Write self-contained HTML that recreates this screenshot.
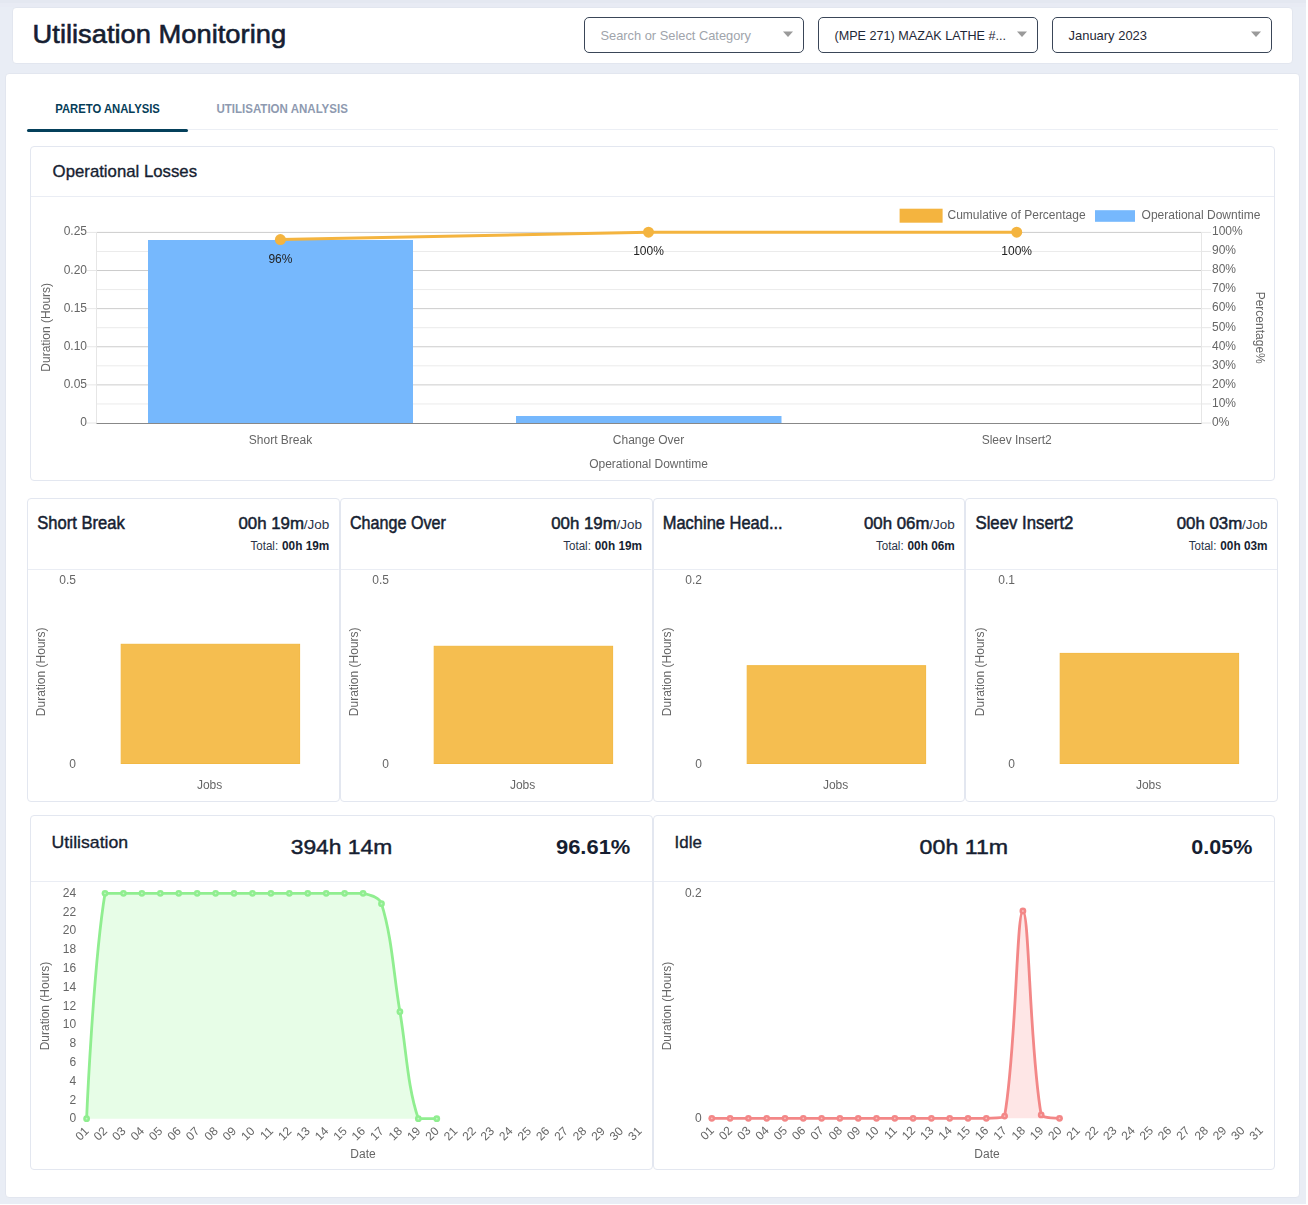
<!DOCTYPE html>
<html><head><meta charset="utf-8"><title>Utilisation Monitoring</title>
<style>
html,body{margin:0;padding:0;}
body{width:1308px;height:1205px;overflow:hidden;position:relative;background:#e9edf5;font-family:"Liberation Sans", sans-serif;}
svg{position:absolute;left:0;top:0;}
svg text{font-family:"Liberation Sans", sans-serif;}
.ch{will-change:transform;}
</style></head><body>
<div style="position:absolute;left:0;top:0;width:1308px;height:3px;background:#e4e8f1"></div>
<div style="position:absolute;left:0;top:3px;width:1308px;height:4px;background:#e8ebf4"></div>
<div style="position:absolute;left:12px;top:7px;width:1281px;height:57px;background:#fff;border:1px solid #e2e6ef;border-radius:4px;box-sizing:border-box;"></div>
<div style="position:absolute;left:5px;top:73px;width:1295px;height:1125px;background:#fff;border:1px solid #e2e6ef;border-radius:4px;box-sizing:border-box;"></div>
<div style="position:absolute;left:584px;top:17px;width:220px;height:36px;border:1px solid #3a4658;border-radius:5px;box-sizing:border-box"></div>
<div style="position:absolute;left:818px;top:17px;width:220px;height:36px;border:1px solid #3a4658;border-radius:5px;box-sizing:border-box"></div>
<div style="position:absolute;left:1052px;top:17px;width:220px;height:36px;border:1px solid #3a4658;border-radius:5px;box-sizing:border-box"></div>
<div style="position:absolute;left:30px;top:146px;width:1245px;height:335px;background:#fff;border:1px solid #e3e7f0;border-radius:4px;box-sizing:border-box;"></div>
<div style="position:absolute;left:27.0px;top:498px;width:312.75px;height:304px;background:#fff;border:1px solid #e3e7f0;border-radius:4px;box-sizing:border-box;"></div>
<div style="position:absolute;left:339.75px;top:498px;width:312.75px;height:304px;background:#fff;border:1px solid #e3e7f0;border-radius:4px;box-sizing:border-box;"></div>
<div style="position:absolute;left:652.5px;top:498px;width:312.75px;height:304px;background:#fff;border:1px solid #e3e7f0;border-radius:4px;box-sizing:border-box;"></div>
<div style="position:absolute;left:965.25px;top:498px;width:312.75px;height:304px;background:#fff;border:1px solid #e3e7f0;border-radius:4px;box-sizing:border-box;"></div>
<div style="position:absolute;left:30px;top:815px;width:622.5px;height:355px;background:#fff;border:1px solid #e3e7f0;border-radius:4px;box-sizing:border-box;"></div>
<div style="position:absolute;left:652.5px;top:815px;width:622.5px;height:355px;background:#fff;border:1px solid #e3e7f0;border-radius:4px;box-sizing:border-box;"></div>
<svg width="1308" height="1205" viewBox="0 0 1308 1205">
<text x="32.60" y="43.00" font-size="26" fill="#161e31" text-anchor="start" textLength="253.50" lengthAdjust="spacingAndGlyphs" stroke="#161e31" stroke-width="0.6">Utilisation Monitoring</text>
<text x="600.50" y="39.70" font-size="13" fill="#a0a4ab" text-anchor="start" textLength="150.50" lengthAdjust="spacingAndGlyphs">Search or Select Category</text>
<text x="834.50" y="39.70" font-size="13" fill="#1f2937" text-anchor="start" textLength="171.50" lengthAdjust="spacingAndGlyphs">(MPE 271) MAZAK LATHE #...</text>
<text x="1068.50" y="39.70" font-size="13" fill="#1f2937" text-anchor="start" textLength="78.50" lengthAdjust="spacingAndGlyphs">January 2023</text>
<rect x="27" y="129" width="1251" height="1" fill="#eceff5"/>
<rect x="27" y="129" width="161" height="3" rx="1.5" fill="#04405b"/>
<text x="55.30" y="113.00" font-size="13" font-weight="700" fill="#053d58" text-anchor="start" textLength="104.50" lengthAdjust="spacingAndGlyphs">PARETO ANALYSIS</text>
<text x="216.40" y="113.00" font-size="13" font-weight="700" fill="#8e9ab0" text-anchor="start" textLength="131.50" lengthAdjust="spacingAndGlyphs">UTILISATION ANALYSIS</text>
<text x="52.60" y="177.00" font-size="17" fill="#161e31" text-anchor="start" textLength="144.50" lengthAdjust="spacingAndGlyphs" stroke="#161e31" stroke-width="0.35">Operational Losses</text>
<text x="37.20" y="529.00" font-size="18" fill="#161e31" text-anchor="start" textLength="87.50" lengthAdjust="spacingAndGlyphs" stroke="#161e31" stroke-width="0.5">Short Break</text>
<text x="329.25" y="529.00" font-size="12" fill="#2a3449" text-anchor="end" textLength="25.50" lengthAdjust="spacingAndGlyphs">/Job</text>
<text x="303.95" y="529.00" font-size="17" fill="#161e31" text-anchor="end" textLength="65.50" lengthAdjust="spacingAndGlyphs" stroke="#161e31" stroke-width="0.5">00h 19m</text>
<text x="329.25" y="549.80" font-size="12" font-weight="700" fill="#161e31" text-anchor="end" textLength="47.20" lengthAdjust="spacingAndGlyphs">00h 19m</text>
<text x="278.15" y="549.80" font-size="12" fill="#2a3449" text-anchor="end" textLength="27.60" lengthAdjust="spacingAndGlyphs">Total:</text>
<text x="349.95" y="529.00" font-size="18" fill="#161e31" text-anchor="start" textLength="96.00" lengthAdjust="spacingAndGlyphs" stroke="#161e31" stroke-width="0.5">Change Over</text>
<text x="642.00" y="529.00" font-size="12" fill="#2a3449" text-anchor="end" textLength="25.50" lengthAdjust="spacingAndGlyphs">/Job</text>
<text x="616.70" y="529.00" font-size="17" fill="#161e31" text-anchor="end" textLength="65.50" lengthAdjust="spacingAndGlyphs" stroke="#161e31" stroke-width="0.5">00h 19m</text>
<text x="642.00" y="549.80" font-size="12" font-weight="700" fill="#161e31" text-anchor="end" textLength="47.20" lengthAdjust="spacingAndGlyphs">00h 19m</text>
<text x="590.90" y="549.80" font-size="12" fill="#2a3449" text-anchor="end" textLength="27.60" lengthAdjust="spacingAndGlyphs">Total:</text>
<text x="662.70" y="529.00" font-size="18" fill="#161e31" text-anchor="start" textLength="120.00" lengthAdjust="spacingAndGlyphs" stroke="#161e31" stroke-width="0.5">Machine Head...</text>
<text x="954.75" y="529.00" font-size="12" fill="#2a3449" text-anchor="end" textLength="25.50" lengthAdjust="spacingAndGlyphs">/Job</text>
<text x="929.45" y="529.00" font-size="17" fill="#161e31" text-anchor="end" textLength="65.50" lengthAdjust="spacingAndGlyphs" stroke="#161e31" stroke-width="0.5">00h 06m</text>
<text x="954.75" y="549.80" font-size="12" font-weight="700" fill="#161e31" text-anchor="end" textLength="47.20" lengthAdjust="spacingAndGlyphs">00h 06m</text>
<text x="903.65" y="549.80" font-size="12" fill="#2a3449" text-anchor="end" textLength="27.60" lengthAdjust="spacingAndGlyphs">Total:</text>
<text x="975.45" y="529.00" font-size="18" fill="#161e31" text-anchor="start" textLength="98.00" lengthAdjust="spacingAndGlyphs" stroke="#161e31" stroke-width="0.5">Sleev Insert2</text>
<text x="1267.50" y="529.00" font-size="12" fill="#2a3449" text-anchor="end" textLength="25.50" lengthAdjust="spacingAndGlyphs">/Job</text>
<text x="1242.20" y="529.00" font-size="17" fill="#161e31" text-anchor="end" textLength="65.50" lengthAdjust="spacingAndGlyphs" stroke="#161e31" stroke-width="0.5">00h 03m</text>
<text x="1267.50" y="549.80" font-size="12" font-weight="700" fill="#161e31" text-anchor="end" textLength="47.20" lengthAdjust="spacingAndGlyphs">00h 03m</text>
<text x="1216.40" y="549.80" font-size="12" fill="#2a3449" text-anchor="end" textLength="27.60" lengthAdjust="spacingAndGlyphs">Total:</text>
<text x="51.60" y="848.10" font-size="17" fill="#161e31" text-anchor="start" textLength="76.60" lengthAdjust="spacingAndGlyphs" stroke="#161e31" stroke-width="0.35">Utilisation</text>
<text x="290.70" y="853.60" font-size="21" fill="#161e31" text-anchor="start" textLength="101.50" lengthAdjust="spacingAndGlyphs" stroke="#161e31" stroke-width="0.45">394h 14m</text>
<text x="556.00" y="853.60" font-size="21" font-weight="700" fill="#161e31" text-anchor="start" textLength="74.30" lengthAdjust="spacingAndGlyphs">96.61%</text>
<text x="674.60" y="848.40" font-size="17" fill="#161e31" text-anchor="start" textLength="27.30" lengthAdjust="spacingAndGlyphs" stroke="#161e31" stroke-width="0.35">Idle</text>
<text x="919.60" y="853.60" font-size="21" fill="#161e31" text-anchor="start" textLength="88.50" lengthAdjust="spacingAndGlyphs" stroke="#161e31" stroke-width="0.45">00h 11m</text>
<text x="1191.30" y="853.80" font-size="21" font-weight="700" fill="#161e31" text-anchor="start" textLength="61.00" lengthAdjust="spacingAndGlyphs">0.05%</text>
</svg>
<svg class="ch" width="1308" height="1205" viewBox="0 0 1308 1205">
<path d="M783.0 31.5 L793.0 31.5 L788.0 37 Z" fill="#9a9a9a"/>
<path d="M1017.0 31.5 L1027.0 31.5 L1022.0 37 Z" fill="#9a9a9a"/>
<path d="M1251.0 31.5 L1261.0 31.5 L1256.0 37 Z" fill="#9a9a9a"/>
<rect x="31.00" y="196.00" width="1243.00" height="1.00" fill="#eaedf4"/>
<line x1="96.50" y1="403.94" x2="1201.50" y2="403.94" stroke="#ebebeb" stroke-width="1"/>
<line x1="96.50" y1="384.88" x2="1201.50" y2="384.88" stroke="#cccccc" stroke-width="1"/>
<line x1="96.50" y1="365.82" x2="1201.50" y2="365.82" stroke="#ebebeb" stroke-width="1"/>
<line x1="96.50" y1="346.76" x2="1201.50" y2="346.76" stroke="#cccccc" stroke-width="1"/>
<line x1="96.50" y1="327.70" x2="1201.50" y2="327.70" stroke="#ebebeb" stroke-width="1"/>
<line x1="96.50" y1="308.64" x2="1201.50" y2="308.64" stroke="#cccccc" stroke-width="1"/>
<line x1="96.50" y1="289.58" x2="1201.50" y2="289.58" stroke="#ebebeb" stroke-width="1"/>
<line x1="96.50" y1="270.52" x2="1201.50" y2="270.52" stroke="#cccccc" stroke-width="1"/>
<line x1="96.50" y1="251.46" x2="1201.50" y2="251.46" stroke="#ebebeb" stroke-width="1"/>
<line x1="96.50" y1="232.40" x2="1201.50" y2="232.40" stroke="#cccccc" stroke-width="1"/>
<line x1="86.50" y1="423.00" x2="96.50" y2="423.00" stroke="#e6e6e6" stroke-width="1"/>
<text x="87.00" y="426.00" font-size="12" fill="#666666" text-anchor="end">0</text>
<line x1="86.50" y1="384.88" x2="96.50" y2="384.88" stroke="#e6e6e6" stroke-width="1"/>
<text x="87.00" y="387.88" font-size="12" fill="#666666" text-anchor="end">0.05</text>
<line x1="86.50" y1="346.76" x2="96.50" y2="346.76" stroke="#e6e6e6" stroke-width="1"/>
<text x="87.00" y="349.76" font-size="12" fill="#666666" text-anchor="end">0.10</text>
<line x1="86.50" y1="308.64" x2="96.50" y2="308.64" stroke="#e6e6e6" stroke-width="1"/>
<text x="87.00" y="311.64" font-size="12" fill="#666666" text-anchor="end">0.15</text>
<line x1="86.50" y1="270.52" x2="96.50" y2="270.52" stroke="#e6e6e6" stroke-width="1"/>
<text x="87.00" y="273.52" font-size="12" fill="#666666" text-anchor="end">0.20</text>
<line x1="86.50" y1="232.40" x2="96.50" y2="232.40" stroke="#e6e6e6" stroke-width="1"/>
<text x="87.00" y="235.40" font-size="12" fill="#666666" text-anchor="end">0.25</text>
<line x1="1201.50" y1="423.00" x2="1211.00" y2="423.00" stroke="#e6e6e6" stroke-width="1"/>
<text x="1212.00" y="425.80" font-size="12" fill="#666666" text-anchor="start">0%</text>
<line x1="1201.50" y1="403.94" x2="1211.00" y2="403.94" stroke="#e6e6e6" stroke-width="1"/>
<text x="1212.00" y="406.74" font-size="12" fill="#666666" text-anchor="start">10%</text>
<line x1="1201.50" y1="384.88" x2="1211.00" y2="384.88" stroke="#e6e6e6" stroke-width="1"/>
<text x="1212.00" y="387.68" font-size="12" fill="#666666" text-anchor="start">20%</text>
<line x1="1201.50" y1="365.82" x2="1211.00" y2="365.82" stroke="#e6e6e6" stroke-width="1"/>
<text x="1212.00" y="368.62" font-size="12" fill="#666666" text-anchor="start">30%</text>
<line x1="1201.50" y1="346.76" x2="1211.00" y2="346.76" stroke="#e6e6e6" stroke-width="1"/>
<text x="1212.00" y="349.56" font-size="12" fill="#666666" text-anchor="start">40%</text>
<line x1="1201.50" y1="327.70" x2="1211.00" y2="327.70" stroke="#e6e6e6" stroke-width="1"/>
<text x="1212.00" y="330.50" font-size="12" fill="#666666" text-anchor="start">50%</text>
<line x1="1201.50" y1="308.64" x2="1211.00" y2="308.64" stroke="#e6e6e6" stroke-width="1"/>
<text x="1212.00" y="311.44" font-size="12" fill="#666666" text-anchor="start">60%</text>
<line x1="1201.50" y1="289.58" x2="1211.00" y2="289.58" stroke="#e6e6e6" stroke-width="1"/>
<text x="1212.00" y="292.38" font-size="12" fill="#666666" text-anchor="start">70%</text>
<line x1="1201.50" y1="270.52" x2="1211.00" y2="270.52" stroke="#e6e6e6" stroke-width="1"/>
<text x="1212.00" y="273.32" font-size="12" fill="#666666" text-anchor="start">80%</text>
<line x1="1201.50" y1="251.46" x2="1211.00" y2="251.46" stroke="#e6e6e6" stroke-width="1"/>
<text x="1212.00" y="254.26" font-size="12" fill="#666666" text-anchor="start">90%</text>
<line x1="1201.50" y1="232.40" x2="1211.00" y2="232.40" stroke="#e6e6e6" stroke-width="1"/>
<text x="1212.00" y="235.20" font-size="12" fill="#666666" text-anchor="start">100%</text>
<line x1="96.50" y1="232.40" x2="96.50" y2="423.00" stroke="#e6e6e6" stroke-width="1"/>
<line x1="1201.50" y1="232.40" x2="1201.50" y2="423.00" stroke="#e6e6e6" stroke-width="1"/>
<rect x="148.00" y="240.00" width="265.00" height="183.00" fill="#76b8fd"/>
<rect x="516.00" y="416.00" width="265.50" height="7.00" fill="#76b8fd"/>
<line x1="96.50" y1="423.50" x2="1201.50" y2="423.50" stroke="#888" stroke-width="1.2"/>
<polyline points="280.4,239.6 648.5,232.2 1016.7,232.2" fill="none" stroke="#f4b43f" stroke-width="3"/>
<circle cx="280.4" cy="239.6" r="5.5" fill="#f4b43f"/>
<circle cx="648.5" cy="232.2" r="5.5" fill="#f4b43f"/>
<circle cx="1016.7" cy="232.2" r="5.5" fill="#f4b43f"/>
<text x="280.40" y="262.60" font-size="12" fill="#222" text-anchor="middle">96%</text>
<text x="648.50" y="255.20" font-size="12" fill="#222" text-anchor="middle">100%</text>
<text x="1016.70" y="255.20" font-size="12" fill="#222" text-anchor="middle">100%</text>
<text x="280.50" y="444.00" font-size="12" fill="#666666" text-anchor="middle">Short Break</text>
<text x="648.50" y="444.00" font-size="12" fill="#666666" text-anchor="middle">Change Over</text>
<text x="1016.70" y="444.00" font-size="12" fill="#666666" text-anchor="middle">Sleev Insert2</text>
<text x="648.50" y="468.00" font-size="12" fill="#666666" text-anchor="middle">Operational Downtime</text>
<text transform="translate(49.6,327.3) rotate(-90)" font-size="12" fill="#666666" text-anchor="middle">Duration (Hours)</text>
<text transform="translate(1255.9,327.7) rotate(90)" font-size="12" fill="#666666" text-anchor="middle">Percentage%</text>
<rect x="899.60" y="208.70" width="43.00" height="14.00" fill="#f4b43f"/>
<text x="947.50" y="219.00" font-size="12" fill="#666666" text-anchor="start">Cumulative of Percentage</text>
<rect x="1095.00" y="210.20" width="40.00" height="11.60" fill="#76b8fd"/>
<text x="1141.60" y="219.00" font-size="12" fill="#666666" text-anchor="start">Operational Downtime</text>
<rect x="28.00" y="569.00" width="310.75" height="1.00" fill="#eaedf4"/>
<text x="75.90" y="584.20" font-size="12" fill="#666666" text-anchor="end">0.5</text>
<text x="75.90" y="767.70" font-size="12" fill="#666666" text-anchor="end">0</text>
<rect x="121.20" y="644.30" width="178.40" height="119.20" fill="#f5be50" stroke="#f2b843" stroke-width="1"/>
<text x="209.60" y="789.00" font-size="12" fill="#666666" text-anchor="middle">Jobs</text>
<text transform="translate(44.9,671.8) rotate(-90)" font-size="12" fill="#666666" text-anchor="middle">Duration (Hours)</text>
<rect x="340.75" y="569.00" width="310.75" height="1.00" fill="#eaedf4"/>
<text x="388.90" y="584.20" font-size="12" fill="#666666" text-anchor="end">0.5</text>
<text x="388.90" y="767.70" font-size="12" fill="#666666" text-anchor="end">0</text>
<rect x="434.20" y="646.30" width="178.40" height="117.20" fill="#f5be50" stroke="#f2b843" stroke-width="1"/>
<text x="522.60" y="789.00" font-size="12" fill="#666666" text-anchor="middle">Jobs</text>
<text transform="translate(357.9,671.8) rotate(-90)" font-size="12" fill="#666666" text-anchor="middle">Duration (Hours)</text>
<rect x="653.50" y="569.00" width="310.75" height="1.00" fill="#eaedf4"/>
<text x="701.90" y="584.20" font-size="12" fill="#666666" text-anchor="end">0.2</text>
<text x="701.90" y="767.70" font-size="12" fill="#666666" text-anchor="end">0</text>
<rect x="747.20" y="665.70" width="178.40" height="97.80" fill="#f5be50" stroke="#f2b843" stroke-width="1"/>
<text x="835.60" y="789.00" font-size="12" fill="#666666" text-anchor="middle">Jobs</text>
<text transform="translate(670.9,671.8) rotate(-90)" font-size="12" fill="#666666" text-anchor="middle">Duration (Hours)</text>
<rect x="966.25" y="569.00" width="310.75" height="1.00" fill="#eaedf4"/>
<text x="1014.90" y="584.20" font-size="12" fill="#666666" text-anchor="end">0.1</text>
<text x="1014.90" y="767.70" font-size="12" fill="#666666" text-anchor="end">0</text>
<rect x="1060.20" y="653.40" width="178.40" height="110.10" fill="#f5be50" stroke="#f2b843" stroke-width="1"/>
<text x="1148.60" y="789.00" font-size="12" fill="#666666" text-anchor="middle">Jobs</text>
<text transform="translate(983.9,671.8) rotate(-90)" font-size="12" fill="#666666" text-anchor="middle">Duration (Hours)</text>
<rect x="31.00" y="881.00" width="621.00" height="1.00" fill="#eaedf4"/>
<rect x="654.00" y="881.00" width="620.00" height="1.00" fill="#eaedf4"/>
<path d="M86.60,1118.70 C86.60,1118.70 93.10,966.25 105.03,893.30 C106.00,893.30 117.01,893.30 123.46,893.30 C129.91,893.30 135.44,893.30 141.89,893.30 C148.34,893.30 153.87,893.30 160.32,893.30 C166.77,893.30 172.30,893.30 178.75,893.30 C185.20,893.30 190.73,893.30 197.18,893.30 C203.63,893.30 209.16,893.30 215.61,893.30 C222.06,893.30 227.59,893.30 234.04,893.30 C240.49,893.30 246.02,893.30 252.47,893.30 C258.92,893.30 264.45,893.30 270.90,893.30 C277.35,893.30 282.88,893.30 289.33,893.30 C295.78,893.30 301.31,893.30 307.76,893.30 C314.21,893.30 319.74,893.30 326.19,893.30 C332.64,893.30 338.17,893.30 344.62,893.30 C351.07,893.30 357.04,893.30 363.05,893.30 C369.94,895.23 379.39,896.94 381.48,903.63 C392.30,938.35 393.43,973.84 399.91,1011.63 C406.33,1049.11 407.31,1086.66 418.34,1118.70 C420.21,1118.70 436.77,1118.70 436.77,1118.70 L436.77,1118.70 L86.60,1118.70 Z" fill="#e7fde7"/>
<path d="M86.60,1118.70 C86.60,1118.70 93.10,966.25 105.03,893.30 C106.00,893.30 117.01,893.30 123.46,893.30 C129.91,893.30 135.44,893.30 141.89,893.30 C148.34,893.30 153.87,893.30 160.32,893.30 C166.77,893.30 172.30,893.30 178.75,893.30 C185.20,893.30 190.73,893.30 197.18,893.30 C203.63,893.30 209.16,893.30 215.61,893.30 C222.06,893.30 227.59,893.30 234.04,893.30 C240.49,893.30 246.02,893.30 252.47,893.30 C258.92,893.30 264.45,893.30 270.90,893.30 C277.35,893.30 282.88,893.30 289.33,893.30 C295.78,893.30 301.31,893.30 307.76,893.30 C314.21,893.30 319.74,893.30 326.19,893.30 C332.64,893.30 338.17,893.30 344.62,893.30 C351.07,893.30 357.04,893.30 363.05,893.30 C369.94,895.23 379.39,896.94 381.48,903.63 C392.30,938.35 393.43,973.84 399.91,1011.63 C406.33,1049.11 407.31,1086.66 418.34,1118.70 C420.21,1118.70 436.77,1118.70 436.77,1118.70" fill="none" stroke="#90ee90" stroke-width="2.8"/>
<circle cx="86.60" cy="1118.70" r="3.4" fill="#90ee90"/><circle cx="86.60" cy="1118.70" r="0.9" fill="#fff" fill-opacity="0.45"/>
<circle cx="105.03" cy="893.30" r="3.4" fill="#90ee90"/><circle cx="105.03" cy="893.30" r="0.9" fill="#fff" fill-opacity="0.45"/>
<circle cx="123.46" cy="893.30" r="3.4" fill="#90ee90"/><circle cx="123.46" cy="893.30" r="0.9" fill="#fff" fill-opacity="0.45"/>
<circle cx="141.89" cy="893.30" r="3.4" fill="#90ee90"/><circle cx="141.89" cy="893.30" r="0.9" fill="#fff" fill-opacity="0.45"/>
<circle cx="160.32" cy="893.30" r="3.4" fill="#90ee90"/><circle cx="160.32" cy="893.30" r="0.9" fill="#fff" fill-opacity="0.45"/>
<circle cx="178.75" cy="893.30" r="3.4" fill="#90ee90"/><circle cx="178.75" cy="893.30" r="0.9" fill="#fff" fill-opacity="0.45"/>
<circle cx="197.18" cy="893.30" r="3.4" fill="#90ee90"/><circle cx="197.18" cy="893.30" r="0.9" fill="#fff" fill-opacity="0.45"/>
<circle cx="215.61" cy="893.30" r="3.4" fill="#90ee90"/><circle cx="215.61" cy="893.30" r="0.9" fill="#fff" fill-opacity="0.45"/>
<circle cx="234.04" cy="893.30" r="3.4" fill="#90ee90"/><circle cx="234.04" cy="893.30" r="0.9" fill="#fff" fill-opacity="0.45"/>
<circle cx="252.47" cy="893.30" r="3.4" fill="#90ee90"/><circle cx="252.47" cy="893.30" r="0.9" fill="#fff" fill-opacity="0.45"/>
<circle cx="270.90" cy="893.30" r="3.4" fill="#90ee90"/><circle cx="270.90" cy="893.30" r="0.9" fill="#fff" fill-opacity="0.45"/>
<circle cx="289.33" cy="893.30" r="3.4" fill="#90ee90"/><circle cx="289.33" cy="893.30" r="0.9" fill="#fff" fill-opacity="0.45"/>
<circle cx="307.76" cy="893.30" r="3.4" fill="#90ee90"/><circle cx="307.76" cy="893.30" r="0.9" fill="#fff" fill-opacity="0.45"/>
<circle cx="326.19" cy="893.30" r="3.4" fill="#90ee90"/><circle cx="326.19" cy="893.30" r="0.9" fill="#fff" fill-opacity="0.45"/>
<circle cx="344.62" cy="893.30" r="3.4" fill="#90ee90"/><circle cx="344.62" cy="893.30" r="0.9" fill="#fff" fill-opacity="0.45"/>
<circle cx="363.05" cy="893.30" r="3.4" fill="#90ee90"/><circle cx="363.05" cy="893.30" r="0.9" fill="#fff" fill-opacity="0.45"/>
<circle cx="381.48" cy="903.63" r="3.4" fill="#90ee90"/><circle cx="381.48" cy="903.63" r="0.9" fill="#fff" fill-opacity="0.45"/>
<circle cx="399.91" cy="1011.63" r="3.4" fill="#90ee90"/><circle cx="399.91" cy="1011.63" r="0.9" fill="#fff" fill-opacity="0.45"/>
<circle cx="418.34" cy="1118.70" r="3.4" fill="#90ee90"/><circle cx="418.34" cy="1118.70" r="0.9" fill="#fff" fill-opacity="0.45"/>
<circle cx="436.77" cy="1118.70" r="3.4" fill="#90ee90"/><circle cx="436.77" cy="1118.70" r="0.9" fill="#fff" fill-opacity="0.45"/>
<text x="76.20" y="1122.30" font-size="12" fill="#666666" text-anchor="end">0</text>
<text x="76.20" y="1103.52" font-size="12" fill="#666666" text-anchor="end">2</text>
<text x="76.20" y="1084.73" font-size="12" fill="#666666" text-anchor="end">4</text>
<text x="76.20" y="1065.95" font-size="12" fill="#666666" text-anchor="end">6</text>
<text x="76.20" y="1047.17" font-size="12" fill="#666666" text-anchor="end">8</text>
<text x="76.20" y="1028.38" font-size="12" fill="#666666" text-anchor="end">10</text>
<text x="76.20" y="1009.60" font-size="12" fill="#666666" text-anchor="end">12</text>
<text x="76.20" y="990.82" font-size="12" fill="#666666" text-anchor="end">14</text>
<text x="76.20" y="972.03" font-size="12" fill="#666666" text-anchor="end">16</text>
<text x="76.20" y="953.25" font-size="12" fill="#666666" text-anchor="end">18</text>
<text x="76.20" y="934.47" font-size="12" fill="#666666" text-anchor="end">20</text>
<text x="76.20" y="915.68" font-size="12" fill="#666666" text-anchor="end">22</text>
<text x="76.20" y="896.90" font-size="12" fill="#666666" text-anchor="end">24</text>
<text transform="translate(89.60,1131.70) rotate(-45)" font-size="12" fill="#666666" text-anchor="end">01</text>
<text transform="translate(108.03,1131.70) rotate(-45)" font-size="12" fill="#666666" text-anchor="end">02</text>
<text transform="translate(126.46,1131.70) rotate(-45)" font-size="12" fill="#666666" text-anchor="end">03</text>
<text transform="translate(144.89,1131.70) rotate(-45)" font-size="12" fill="#666666" text-anchor="end">04</text>
<text transform="translate(163.32,1131.70) rotate(-45)" font-size="12" fill="#666666" text-anchor="end">05</text>
<text transform="translate(181.75,1131.70) rotate(-45)" font-size="12" fill="#666666" text-anchor="end">06</text>
<text transform="translate(200.18,1131.70) rotate(-45)" font-size="12" fill="#666666" text-anchor="end">07</text>
<text transform="translate(218.61,1131.70) rotate(-45)" font-size="12" fill="#666666" text-anchor="end">08</text>
<text transform="translate(237.04,1131.70) rotate(-45)" font-size="12" fill="#666666" text-anchor="end">09</text>
<text transform="translate(255.47,1131.70) rotate(-45)" font-size="12" fill="#666666" text-anchor="end">10</text>
<text transform="translate(273.90,1131.70) rotate(-45)" font-size="12" fill="#666666" text-anchor="end">11</text>
<text transform="translate(292.33,1131.70) rotate(-45)" font-size="12" fill="#666666" text-anchor="end">12</text>
<text transform="translate(310.76,1131.70) rotate(-45)" font-size="12" fill="#666666" text-anchor="end">13</text>
<text transform="translate(329.19,1131.70) rotate(-45)" font-size="12" fill="#666666" text-anchor="end">14</text>
<text transform="translate(347.62,1131.70) rotate(-45)" font-size="12" fill="#666666" text-anchor="end">15</text>
<text transform="translate(366.05,1131.70) rotate(-45)" font-size="12" fill="#666666" text-anchor="end">16</text>
<text transform="translate(384.48,1131.70) rotate(-45)" font-size="12" fill="#666666" text-anchor="end">17</text>
<text transform="translate(402.91,1131.70) rotate(-45)" font-size="12" fill="#666666" text-anchor="end">18</text>
<text transform="translate(421.34,1131.70) rotate(-45)" font-size="12" fill="#666666" text-anchor="end">19</text>
<text transform="translate(439.77,1131.70) rotate(-45)" font-size="12" fill="#666666" text-anchor="end">20</text>
<text transform="translate(458.20,1131.70) rotate(-45)" font-size="12" fill="#666666" text-anchor="end">21</text>
<text transform="translate(476.63,1131.70) rotate(-45)" font-size="12" fill="#666666" text-anchor="end">22</text>
<text transform="translate(495.06,1131.70) rotate(-45)" font-size="12" fill="#666666" text-anchor="end">23</text>
<text transform="translate(513.49,1131.70) rotate(-45)" font-size="12" fill="#666666" text-anchor="end">24</text>
<text transform="translate(531.92,1131.70) rotate(-45)" font-size="12" fill="#666666" text-anchor="end">25</text>
<text transform="translate(550.35,1131.70) rotate(-45)" font-size="12" fill="#666666" text-anchor="end">26</text>
<text transform="translate(568.78,1131.70) rotate(-45)" font-size="12" fill="#666666" text-anchor="end">27</text>
<text transform="translate(587.21,1131.70) rotate(-45)" font-size="12" fill="#666666" text-anchor="end">28</text>
<text transform="translate(605.64,1131.70) rotate(-45)" font-size="12" fill="#666666" text-anchor="end">29</text>
<text transform="translate(624.07,1131.70) rotate(-45)" font-size="12" fill="#666666" text-anchor="end">30</text>
<text transform="translate(642.50,1131.70) rotate(-45)" font-size="12" fill="#666666" text-anchor="end">31</text>
<text transform="translate(49.4,1006) rotate(-90)" font-size="12" fill="#666666" text-anchor="middle">Duration (Hours)</text>
<text x="363.00" y="1158.00" font-size="12" fill="#666666" text-anchor="middle">Date</text>
<path d="M711.80,1118.30 C711.80,1118.30 723.69,1118.30 730.10,1118.30 C736.50,1118.30 742.00,1118.30 748.40,1118.30 C754.80,1118.30 760.29,1118.30 766.70,1118.30 C773.10,1118.30 778.60,1118.30 785.00,1118.30 C791.40,1118.30 796.89,1118.30 803.30,1118.30 C809.70,1118.30 815.19,1118.30 821.60,1118.30 C828.00,1118.30 833.50,1118.30 839.90,1118.30 C846.30,1118.30 851.79,1118.30 858.20,1118.30 C864.60,1118.30 870.10,1118.30 876.50,1118.30 C882.90,1118.30 888.39,1118.30 894.80,1118.30 C901.20,1118.30 906.69,1118.30 913.10,1118.30 C919.50,1118.30 925.00,1118.30 931.40,1118.30 C937.80,1118.30 943.29,1118.30 949.70,1118.30 C956.10,1118.30 961.60,1118.30 968.00,1118.30 C974.40,1118.30 979.92,1118.30 986.30,1118.30 C992.73,1117.90 1003.55,1118.30 1004.60,1116.05 C1016.36,1049.46 1016.48,911.22 1022.90,911.02 C1029.29,911.02 1029.46,1048.42 1041.20,1114.92 C1042.27,1118.30 1059.50,1118.30 1059.50,1118.30 L1059.50,1118.30 L711.80,1118.30 Z" fill="#fee6e6"/>
<path d="M711.80,1118.30 C711.80,1118.30 723.69,1118.30 730.10,1118.30 C736.50,1118.30 742.00,1118.30 748.40,1118.30 C754.80,1118.30 760.29,1118.30 766.70,1118.30 C773.10,1118.30 778.60,1118.30 785.00,1118.30 C791.40,1118.30 796.89,1118.30 803.30,1118.30 C809.70,1118.30 815.19,1118.30 821.60,1118.30 C828.00,1118.30 833.50,1118.30 839.90,1118.30 C846.30,1118.30 851.79,1118.30 858.20,1118.30 C864.60,1118.30 870.10,1118.30 876.50,1118.30 C882.90,1118.30 888.39,1118.30 894.80,1118.30 C901.20,1118.30 906.69,1118.30 913.10,1118.30 C919.50,1118.30 925.00,1118.30 931.40,1118.30 C937.80,1118.30 943.29,1118.30 949.70,1118.30 C956.10,1118.30 961.60,1118.30 968.00,1118.30 C974.40,1118.30 979.92,1118.30 986.30,1118.30 C992.73,1117.90 1003.55,1118.30 1004.60,1116.05 C1016.36,1049.46 1016.48,911.22 1022.90,911.02 C1029.29,911.02 1029.46,1048.42 1041.20,1114.92 C1042.27,1118.30 1059.50,1118.30 1059.50,1118.30" fill="none" stroke="#f38787" stroke-width="2.8"/>
<circle cx="711.80" cy="1118.30" r="3.4" fill="#f38787"/><circle cx="711.80" cy="1118.30" r="0.9" fill="#fff" fill-opacity="0.45"/>
<circle cx="730.10" cy="1118.30" r="3.4" fill="#f38787"/><circle cx="730.10" cy="1118.30" r="0.9" fill="#fff" fill-opacity="0.45"/>
<circle cx="748.40" cy="1118.30" r="3.4" fill="#f38787"/><circle cx="748.40" cy="1118.30" r="0.9" fill="#fff" fill-opacity="0.45"/>
<circle cx="766.70" cy="1118.30" r="3.4" fill="#f38787"/><circle cx="766.70" cy="1118.30" r="0.9" fill="#fff" fill-opacity="0.45"/>
<circle cx="785.00" cy="1118.30" r="3.4" fill="#f38787"/><circle cx="785.00" cy="1118.30" r="0.9" fill="#fff" fill-opacity="0.45"/>
<circle cx="803.30" cy="1118.30" r="3.4" fill="#f38787"/><circle cx="803.30" cy="1118.30" r="0.9" fill="#fff" fill-opacity="0.45"/>
<circle cx="821.60" cy="1118.30" r="3.4" fill="#f38787"/><circle cx="821.60" cy="1118.30" r="0.9" fill="#fff" fill-opacity="0.45"/>
<circle cx="839.90" cy="1118.30" r="3.4" fill="#f38787"/><circle cx="839.90" cy="1118.30" r="0.9" fill="#fff" fill-opacity="0.45"/>
<circle cx="858.20" cy="1118.30" r="3.4" fill="#f38787"/><circle cx="858.20" cy="1118.30" r="0.9" fill="#fff" fill-opacity="0.45"/>
<circle cx="876.50" cy="1118.30" r="3.4" fill="#f38787"/><circle cx="876.50" cy="1118.30" r="0.9" fill="#fff" fill-opacity="0.45"/>
<circle cx="894.80" cy="1118.30" r="3.4" fill="#f38787"/><circle cx="894.80" cy="1118.30" r="0.9" fill="#fff" fill-opacity="0.45"/>
<circle cx="913.10" cy="1118.30" r="3.4" fill="#f38787"/><circle cx="913.10" cy="1118.30" r="0.9" fill="#fff" fill-opacity="0.45"/>
<circle cx="931.40" cy="1118.30" r="3.4" fill="#f38787"/><circle cx="931.40" cy="1118.30" r="0.9" fill="#fff" fill-opacity="0.45"/>
<circle cx="949.70" cy="1118.30" r="3.4" fill="#f38787"/><circle cx="949.70" cy="1118.30" r="0.9" fill="#fff" fill-opacity="0.45"/>
<circle cx="968.00" cy="1118.30" r="3.4" fill="#f38787"/><circle cx="968.00" cy="1118.30" r="0.9" fill="#fff" fill-opacity="0.45"/>
<circle cx="986.30" cy="1118.30" r="3.4" fill="#f38787"/><circle cx="986.30" cy="1118.30" r="0.9" fill="#fff" fill-opacity="0.45"/>
<circle cx="1004.60" cy="1116.05" r="3.4" fill="#f38787"/><circle cx="1004.60" cy="1116.05" r="0.9" fill="#fff" fill-opacity="0.45"/>
<circle cx="1022.90" cy="911.02" r="3.4" fill="#f38787"/><circle cx="1022.90" cy="911.02" r="0.9" fill="#fff" fill-opacity="0.45"/>
<circle cx="1041.20" cy="1114.92" r="3.4" fill="#f38787"/><circle cx="1041.20" cy="1114.92" r="0.9" fill="#fff" fill-opacity="0.45"/>
<circle cx="1059.50" cy="1118.30" r="3.4" fill="#f38787"/><circle cx="1059.50" cy="1118.30" r="0.9" fill="#fff" fill-opacity="0.45"/>
<text x="701.60" y="1121.90" font-size="12" fill="#666666" text-anchor="end">0</text>
<text x="701.60" y="896.60" font-size="12" fill="#666666" text-anchor="end">0.2</text>
<text transform="translate(714.80,1131.30) rotate(-45)" font-size="12" fill="#666666" text-anchor="end">01</text>
<text transform="translate(733.10,1131.30) rotate(-45)" font-size="12" fill="#666666" text-anchor="end">02</text>
<text transform="translate(751.40,1131.30) rotate(-45)" font-size="12" fill="#666666" text-anchor="end">03</text>
<text transform="translate(769.70,1131.30) rotate(-45)" font-size="12" fill="#666666" text-anchor="end">04</text>
<text transform="translate(788.00,1131.30) rotate(-45)" font-size="12" fill="#666666" text-anchor="end">05</text>
<text transform="translate(806.30,1131.30) rotate(-45)" font-size="12" fill="#666666" text-anchor="end">06</text>
<text transform="translate(824.60,1131.30) rotate(-45)" font-size="12" fill="#666666" text-anchor="end">07</text>
<text transform="translate(842.90,1131.30) rotate(-45)" font-size="12" fill="#666666" text-anchor="end">08</text>
<text transform="translate(861.20,1131.30) rotate(-45)" font-size="12" fill="#666666" text-anchor="end">09</text>
<text transform="translate(879.50,1131.30) rotate(-45)" font-size="12" fill="#666666" text-anchor="end">10</text>
<text transform="translate(897.80,1131.30) rotate(-45)" font-size="12" fill="#666666" text-anchor="end">11</text>
<text transform="translate(916.10,1131.30) rotate(-45)" font-size="12" fill="#666666" text-anchor="end">12</text>
<text transform="translate(934.40,1131.30) rotate(-45)" font-size="12" fill="#666666" text-anchor="end">13</text>
<text transform="translate(952.70,1131.30) rotate(-45)" font-size="12" fill="#666666" text-anchor="end">14</text>
<text transform="translate(971.00,1131.30) rotate(-45)" font-size="12" fill="#666666" text-anchor="end">15</text>
<text transform="translate(989.30,1131.30) rotate(-45)" font-size="12" fill="#666666" text-anchor="end">16</text>
<text transform="translate(1007.60,1131.30) rotate(-45)" font-size="12" fill="#666666" text-anchor="end">17</text>
<text transform="translate(1025.90,1131.30) rotate(-45)" font-size="12" fill="#666666" text-anchor="end">18</text>
<text transform="translate(1044.20,1131.30) rotate(-45)" font-size="12" fill="#666666" text-anchor="end">19</text>
<text transform="translate(1062.50,1131.30) rotate(-45)" font-size="12" fill="#666666" text-anchor="end">20</text>
<text transform="translate(1080.80,1131.30) rotate(-45)" font-size="12" fill="#666666" text-anchor="end">21</text>
<text transform="translate(1099.10,1131.30) rotate(-45)" font-size="12" fill="#666666" text-anchor="end">22</text>
<text transform="translate(1117.40,1131.30) rotate(-45)" font-size="12" fill="#666666" text-anchor="end">23</text>
<text transform="translate(1135.70,1131.30) rotate(-45)" font-size="12" fill="#666666" text-anchor="end">24</text>
<text transform="translate(1154.00,1131.30) rotate(-45)" font-size="12" fill="#666666" text-anchor="end">25</text>
<text transform="translate(1172.30,1131.30) rotate(-45)" font-size="12" fill="#666666" text-anchor="end">26</text>
<text transform="translate(1190.60,1131.30) rotate(-45)" font-size="12" fill="#666666" text-anchor="end">27</text>
<text transform="translate(1208.90,1131.30) rotate(-45)" font-size="12" fill="#666666" text-anchor="end">28</text>
<text transform="translate(1227.20,1131.30) rotate(-45)" font-size="12" fill="#666666" text-anchor="end">29</text>
<text transform="translate(1245.50,1131.30) rotate(-45)" font-size="12" fill="#666666" text-anchor="end">30</text>
<text transform="translate(1263.80,1131.30) rotate(-45)" font-size="12" fill="#666666" text-anchor="end">31</text>
<text transform="translate(671.2,1006) rotate(-90)" font-size="12" fill="#666666" text-anchor="middle">Duration (Hours)</text>
<text x="987.00" y="1158.00" font-size="12" fill="#666666" text-anchor="middle">Date</text>
</svg>
<div style="position:absolute;left:1306px;top:0;width:2px;height:1205px;background:#fff"></div>
<div style="position:absolute;left:0;top:1204px;width:1308px;height:1px;background:#fff"></div>
</body></html>
